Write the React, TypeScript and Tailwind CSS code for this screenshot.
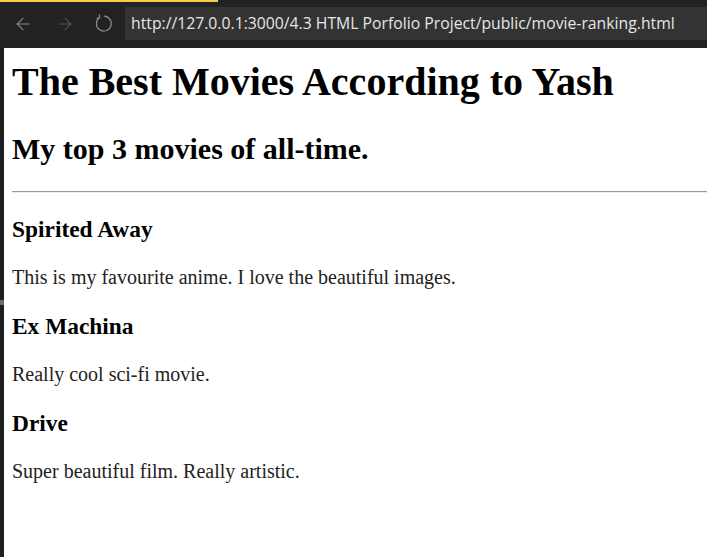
import { ArrowLeft, ArrowRight } from 'lucide-react'

const movies = [
  { title: 'Spirited Away', note: 'This is my favourite anime. I love the beautiful images.' },
  { title: 'Ex Machina', note: 'Really cool sci-fi movie.' },
  { title: 'Drive', note: 'Super beautiful film. Really artistic.' },
]

function RefreshIcon() {
  return (
    <svg width="21" height="21" viewBox="0 0 24 24" fill="none" stroke="currentColor" strokeWidth="1.4" strokeLinecap="round">
      <path d="M13 3.6 A 8.5 8.5 0 1 1 7.4 5.2" />
      <path d="M7.2 2.2 L7.6 5.4 L4.6 6.2" />
    </svg>
  )
}

export default function App() {
  return (
    <div className="h-[557px] w-[707px] overflow-hidden bg-white flex flex-col">
      {/* Browser chrome */}
      <div className="h-[48px] bg-[#222222] flex flex-col shrink-0">
        <div className="h-[2px] w-[218px] bg-[#f4cd4b]" />
        <div className="flex items-center pt-[5px]">
          <div className="w-[4px]" />
          <div className="flex items-center w-[121px] text-[#8a8a8a]">
            <span className="ml-[9px]">
              <ArrowLeft size={20} strokeWidth={1.3} />
            </span>
            <span className="ml-[22px] text-[#555555]">
              <ArrowRight size={20} strokeWidth={1.3} />
            </span>
            <span className="ml-[18px]">
              <RefreshIcon />
            </span>
          </div>
          <div
            className="flex-1 h-[33px] bg-[#333333] flex items-center pl-[6px] text-[15.75px] text-[#e6e6e6] whitespace-nowrap"
            style={{ fontFamily: '"Open Sans", sans-serif' }}
          >
            http://127.0.0.1:3000/4.3 HTML Porfolio Project/public/movie-ranking.html
          </div>
        </div>
      </div>

      {/* Page */}
      <div className="flex flex-1">
        <div className="w-[4px] bg-[#1f1f1f] flex flex-col">
          <div className="mt-[252px] h-[5px] bg-[#6b6b6b]" />
        </div>
        <div
          className="flex-1 pl-[8px] text-black leading-[normal]"
          style={{ fontFamily: '"Liberation Serif", "Times New Roman", serif' }}
        >
          <h1 className="text-[40px] font-bold mt-[10px] mb-[26.8px]">The Best Movies According to Yash</h1>
          <h2 className="text-[30px] font-bold mb-[24.9px]">My top 3 movies of all-time.</h2>
          <hr className="border-0 border-t border-t-[#9a9a9a] border-b border-b-[#eeeeee] h-0" />
          {movies.map(m => (
            <div key={m.title}>
              <h3 className="text-[23.4px] font-bold my-[23.4px]">{m.title}</h3>
              <p className="text-[20px] my-[20px] text-[#222222]">{m.note}</p>
            </div>
          ))}
        </div>
      </div>
    </div>
  )
}
